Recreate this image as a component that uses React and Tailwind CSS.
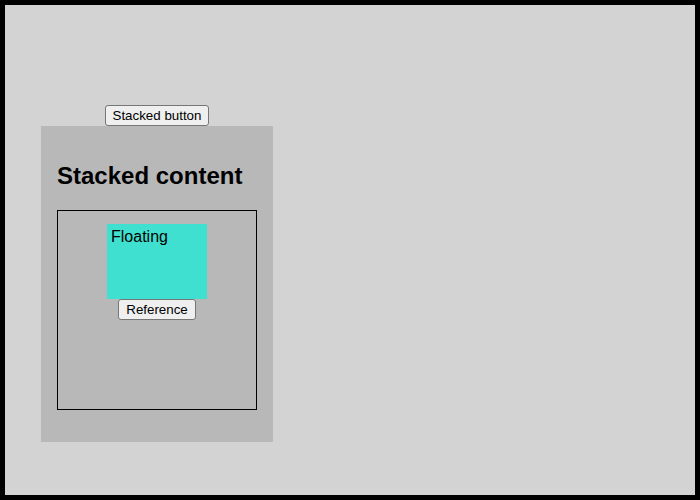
export default function App() {
  const btn =
    "bg-[#efefef] border border-[#767676] rounded-[3px] px-[7px] py-px text-[13.33px] leading-[17px] text-black"

  return (
    <div className="h-[500px] w-[700px] border-[5px] border-black bg-[#d3d3d3] font-['Liberation_Sans',Arial,sans-serif] text-black">
      <div className="pl-[36px] pt-[100px]">
        <div className="flex w-[232px] flex-col items-center">
          <button className={btn}>Stacked button</button>
          <div className="w-[232px] self-stretch bg-[#b8b8b8] px-[16px] pt-[16px] pb-[32px]">
            <h2 className="my-[20px] text-[24px] font-bold leading-[28px]">Stacked content</h2>
            <div className="flex h-[200px] w-[200px] flex-col items-center border border-black pt-[13px]">
              <div className="h-[75px] w-[100px] bg-[#40e0d0] p-[4px] text-[16px] leading-[18px]">Floating</div>
              <button className={btn}>Reference</button>
            </div>
          </div>
        </div>
      </div>
    </div>
  )
}
